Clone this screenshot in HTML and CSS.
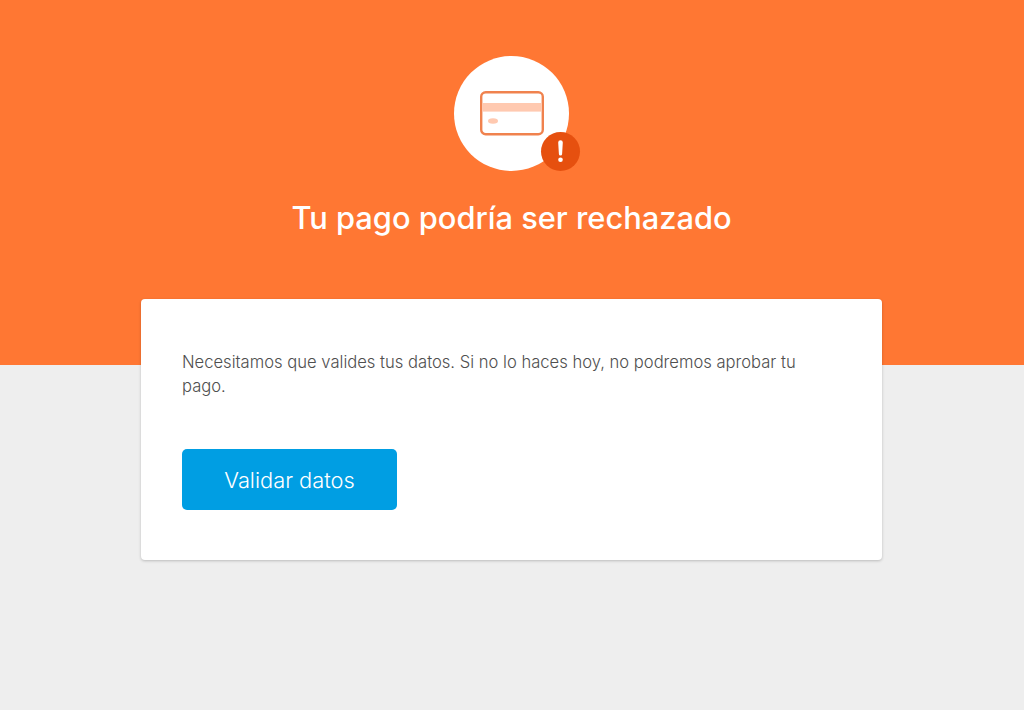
FILE: index.html
```html
<!DOCTYPE html>
<html lang="es">
<head>
    <meta charset="UTF-8">
    <meta name="viewport" content="width=device-width, initial-scale=1.0">
    <title>Tu pago podría ser rechazado</title>
    <link rel="stylesheet" href="styles.css">
</head>
<body>
    <header class="hero">
        <div class="hero-icon">
            <svg class="card-icon" width="64" height="45" viewBox="0 0 64 45" fill="none">
                <rect x="1.2" y="1.2" width="61.6" height="42" rx="4.5" stroke="#f0824e" stroke-width="2.4"/>
                <rect x="2.4" y="12" width="59.2" height="8.6" fill="#ffc9b0"/>
                <ellipse cx="13" cy="30" rx="5" ry="2.8" fill="#ffc9b0"/>
            </svg>
            <span class="hero-badge">
                <svg width="39" height="39" viewBox="0 0 39 39">
                    <path d="M17.2 10.6a2.3 2.3 0 0 1 4.6 0l-.7 11.4a1.6 1.6 0 0 1-3.2 0z" fill="#ffffff"/>
                    <circle cx="19.5" cy="27.8" r="2.3" fill="#ffffff"/>
                </svg>
            </span>
        </div>
        <h1>Tu pago podría ser rechazado</h1>
    </header>

    <main class="card">
        <p>Necesitamos que valides tus datos. Si no lo haces hoy, no podremos aprobar tu pago.</p>
        <button class="primary">Validar datos</button>
    </main>
</body>
</html>
```

FILE: styles.css
```css
* {
    box-sizing: border-box;
}

body {
    font-family: Inter, Lato, sans-serif;
    background-color: #eeeeee;
    margin: 0;
    min-height: 710px;
}

.hero {
    height: 365px;
    padding-top: 56px;
    background-color: #ff7733;
    display: flex;
    flex-direction: column;
    align-items: center;
}

.hero-icon {
    position: relative;
    width: 115px;
    height: 115px;
    margin-right: 1px;
    border-radius: 50%;
    background: #ffffff;
    display: flex;
    align-items: center;
    justify-content: center;
}

.card-icon {
    margin-left: 1px;
}

.hero-badge {
    position: absolute;
    left: 87px;
    top: 76px;
    width: 39px;
    height: 39px;
    border-radius: 50%;
    background: #e6500f;
}

h1 {
    margin: 28px 1px 0 0;
    color: #ffffff;
    font-size: 30.8px;
    font-weight: 500;
    line-height: 38px;
}

.card {
    width: 741px;
    height: 261px;
    margin: -66px 0 0 141px;
    padding: 51px 41px 0;
    position: relative;
    background: #ffffff;
    border-radius: 4px;
    box-shadow: 0 1px 3px rgba(0, 0, 0, 0.22);
}

.card p {
    margin: 0;
    color: #4f4f4f;
    font-size: 16.6px;
    font-weight: 300;
    line-height: 24px;
    max-width: 630px;
}

.primary {
    display: block;
    width: 215px;
    height: 61px;
    margin-top: 51px;
    border: none;
    border-radius: 5px;
    background-color: #009ee3;
    color: #ffffff;
    font-family: inherit;
    font-size: 21.8px;
    font-weight: 300;
    padding-top: 2px;
    cursor: pointer;
}
```
